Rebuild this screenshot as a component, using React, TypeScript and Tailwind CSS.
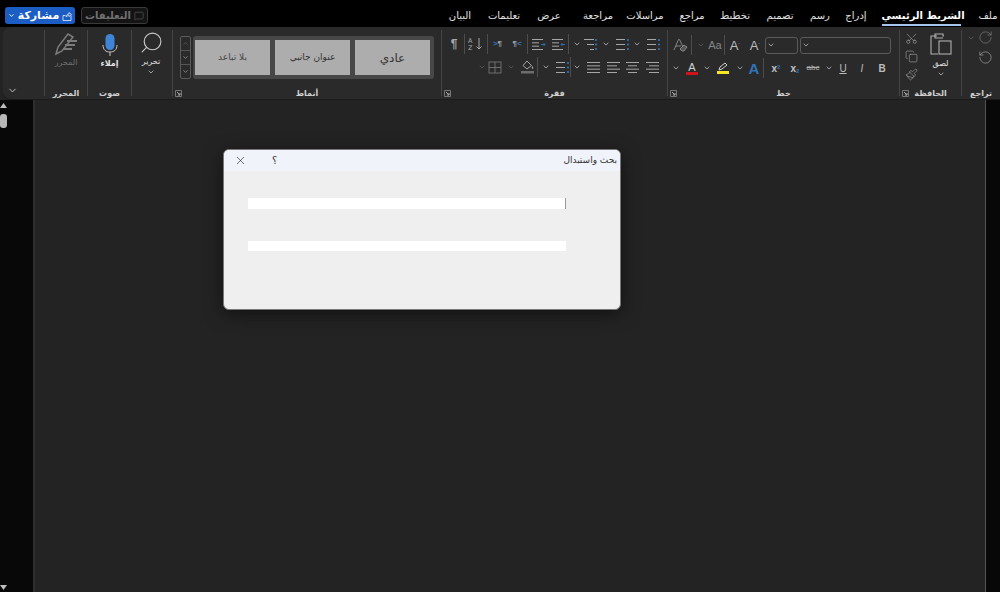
import React from "react";
import { ChevronDown, ChevronUp, X, Search, Scissors, Copy, Paintbrush, RotateCw, RotateCcw, MessageSquare } from "lucide-react";

const C = "#b4b4b4";
const LAT = "font-['Liberation_Sans',sans-serif]";

function Chev({ w = "w-[10px]", dim = false }: { w?: string; dim?: boolean }) {
  return (
    <span className={`${w} flex justify-center shrink-0 ${dim ? "text-[#5f5f5f]" : "text-[#c8c8c8]"}`}>
      <ChevronDown size={8} strokeWidth={2.2} />
    </span>
  );
}

function Lines({ rows, blue = false, indent = 0 }: { rows: [number, number][]; blue?: boolean; indent?: number }) {
  return (
    <svg width="15" height="13" viewBox="0 0 15 13" fill="none" className="shrink-0">
      {rows.map(([a, b], i) => (
        <line key={i} x1={a} x2={b} y1={1.5 + i * (10 / (rows.length - 1))} y2={1.5 + i * (10 / (rows.length - 1))} stroke={C} strokeWidth="0.9" />
      ))}
      {blue && (
        <>
          <circle cx="13" cy="2" r="1.1" fill="#2f74b8" />
          <circle cx="13" cy="6.5" r="1.1" fill="#2f74b8" />
          <circle cx="13" cy="11" r="1.1" fill="#2f74b8" />
        </>
      )}
      {indent === 1 && <path d="M10 6.5h4M12.5 5l1.5 1.5-1.5 1.5" stroke="#2f74b8" strokeWidth="0.9" />}
      {indent === 2 && <path d="M14 6.5h-4M11.5 5L10 6.5 11.5 8" stroke="#2f74b8" strokeWidth="0.9" />}
    </svg>
  );
}

const Sep = () => <span className="w-px h-[20px] bg-[#4d4d4d] shrink-0" />;
const Cell = ({ w, children }: { w: string; children?: React.ReactNode }) => (
  <span className={`${w} h-[20px] shrink-0 flex items-center justify-center`}>{children}</span>
);
const Launcher = () => (
  <svg width="7" height="7" viewBox="0 0 7 7" fill="none" className="shrink-0">
    <path d="M.5 6.5v-6h6v6z" stroke="#777" />
    <path d="M2 2l3 3M5 3v2H3" stroke="#aaa" />
  </svg>
);

function Group({ w, label, launcher, children }: { w: string; label?: string; launcher?: boolean; children: React.ReactNode }) {
  return (
    <div className={`${w} shrink-0 h-full flex`}>
      <span className="w-px h-[66px] mt-[3px] bg-[#454545] shrink-0" />
      <div className="flex-1 min-w-0 flex flex-col">
        <div className="flex-1 min-h-0">{children}</div>
        <div className="h-[14px] flex items-center relative">
          {launcher && (
            <span className="absolute left-[2px] top-[5px]">
              <Launcher />
            </span>
          )}
          <span className="w-full text-center text-[8px] leading-[14px] pt-[3px] font-bold text-[#d0d0d0]">{label}</span>
        </div>
      </div>
    </div>
  );
}

const Tab = ({ w, t, active }: { w: string; t: string; active?: boolean }) => (
  <div className={`${w} shrink-0 flex justify-center`}>
    <span className={`whitespace-nowrap text-[10px] ${active ? "font-bold text-white border-b-2 border-[#a9c4ea] leading-[17px] h-[19px] w-[79px] text-center" : "leading-[18px] h-[18px] text-[#e0e0e0]"}`}>{t}</span>
  </div>
);

function ParaGroup() {
  return (
    <div className="pt-[7px] pl-[2px] flex flex-col gap-[3px]">
      <div className="flex items-center">
        <Cell w="w-[20px]"><span className={`${LAT} text-[12px] font-bold text-[#a8a8a8]`}>¶</span></Cell>
        <Sep />
        <Cell w="w-[22px]">
          <svg width="16" height="14" viewBox="0 0 16 14" fill="none">
            <text x="0" y="6" fontSize="6.5" fill="#a8a8a8">A</text>
            <text x="0" y="13" fontSize="6.5" fill="#a8a8a8">Z</text>
            <path d="M11 1v11M8.5 9.5L11 12l2.500-2.500" stroke={C} strokeWidth="0.9" />
          </svg>
        </Cell>
        <Sep />
        <Cell w="w-[19px]"><span className={`${LAT} text-[8px] font-bold text-[#a8a8a8]`}><span className="text-[#2f74b8]">&gt;</span>¶</span></Cell>
        <Cell w="w-[20px]"><span className={`${LAT} text-[8px] font-bold text-[#a8a8a8]`}>¶<span className="text-[#2f74b8]">&lt;</span></span></Cell>
        <Sep />
        <Cell w="w-[20px]"><Lines rows={[[1, 12], [1, 8], [1, 8], [1, 12]]} indent={1} /></Cell>
        <Cell w="w-[20px]"><Lines rows={[[1, 12], [1, 8], [1, 8], [1, 12]]} indent={2} /></Cell>
        <Sep />
        <span className="w-[3px] shrink-0" />
        <Chev />
        <Cell w="w-[16px]"><Lines rows={[[1, 11], [4, 11], [7, 11]]} blue /></Cell>
        <Chev w="w-[16px]" />
        <Cell w="w-[16px]"><Lines rows={[[1, 10], [1, 10], [1, 10]]} blue /></Cell>
        <Chev w="w-[14px]" />
        <Cell w="w-[18px]"><Lines rows={[[1, 10], [1, 10], [1, 10]]} blue /></Cell>
      </div>
      <div className="flex items-center">
        <span className="w-[33px] shrink-0" />
        <Chev dim />
        <Cell w="w-[16px]">
          <svg width="14" height="13" viewBox="0 0 14 13" fill="none" stroke="#6d6d6d" className="shrink-0">
            <rect x="1" y="1" width="12" height="11" />
            <path d="M7 1v11M1 6.500h12" />
          </svg>
        </Cell>
        <Chev w="w-[16px]" dim />
        <Cell w="w-[16px]">
          <svg width="15" height="14" viewBox="0 0 15 14" fill="none" className="shrink-0">
            <path d="M7 1l4.500 4.500L7 9 3 5.500z" stroke="#a5a5a5" />
            <path d="M12.500 6c1 1.500 1 2.500 0 3-1-.5-1-1.500 0-3z" fill="#a5a5a5" />
            <rect x="1" y="11" width="13" height="2.500" fill="#6d6d6d" />
          </svg>
        </Cell>
        <span className="w-[2px] shrink-0" />
        <Sep />
        <Chev w="w-[16px]" />
        <Cell w="w-[16px]"><Lines rows={[[1, 10], [1, 10], [1, 10]]} blue /></Cell>
        <Sep />
        <Chev w="w-[12px]" />
        <Cell w="w-[20px]"><Lines rows={[[1, 14], [1, 14], [1, 14], [1, 14]]} /></Cell>
        <Cell w="w-[20px]"><Lines rows={[[1, 14], [1, 11], [1, 14], [1, 11]]} /></Cell>
        <Cell w="w-[19px]"><Lines rows={[[1, 14], [3, 12], [1, 14], [3, 12]]} /></Cell>
        <Cell w="w-[20px]"><Lines rows={[[1, 14], [4, 14], [1, 14], [4, 14]]} /></Cell>
      </div>
    </div>
  );
}

function FontGroup() {
  return (
    <div className={`pt-[8px] pl-[3px] flex flex-col gap-[3px] ${LAT}`}>
      <div className="flex items-center h-[20px]">
        <Cell w="w-[20px]">
          <svg width="16" height="15" viewBox="0 0 16 15" fill="none" stroke="#858585">
            <path d="M1 12L5.500 1.500h1L10 9M3 8h5" />
            <path d="M9 13l-2-2 4-4 3 2-3 4z" fill="#555" />
          </svg>
        </Cell>
        <Sep />
        <span className="w-[4px] shrink-0" />
        <Chev dim />
        <Cell w="w-[18px]"><span className="text-[11px] text-[#858585]">Aa</span></Cell>
        <Sep />
        <Cell w="w-[20px]"><span className="text-[13px] text-[#bcbcbc] leading-none">A<sup className="text-[6px] text-[#2f74b8]">ˇ</sup></span></Cell>
        <Cell w="w-[20px]"><span className="text-[13px] text-[#bcbcbc] leading-none">A<sup className="text-[6px] text-[#2f74b8]">ˆ</sup></span></Cell>
        <div className="w-[33px] h-[17px] border border-[#5a5a5a] rounded-[3px] flex items-center shrink-0">
          <Chev />
        </div>
        <div className="w-[91px] h-[17px] border border-[#5a5a5a] rounded-[3px] flex items-center shrink-0 ml-[2px]">
          <Chev />
        </div>
      </div>
      <div className="flex items-center h-[20px]">
        <Chev />
        <Cell w="w-[22px]">
          <span className="flex flex-col items-center leading-none">
            <span className="text-[11px] text-[#d0d0d0] leading-[10px]">A</span>
            <span className="w-[12px] h-[3px] bg-[#d0131b]" />
          </span>
        </Cell>
        <Chev w="w-[8px]" />
        <Cell w="w-[24px]">
          <span className="flex flex-col items-center">
            <svg width="12" height="9" viewBox="0 0 12 9" fill="none"><path d="M2 8l1-3 5-4 2 2-5 4z" stroke="#d0d0d0" /></svg>
            <span className="w-[12px] h-[3px] bg-[#f5e625]" />
          </span>
        </Cell>
        <Chev />
        <Cell w="w-[18px]"><span className="text-[15px] font-bold text-[#2f74b8] leading-none">A</span></Cell>
        <Sep />
        <Cell w="w-[24px]"><span className="text-[10px] font-bold text-[#c4c4c4]">x<sup className="text-[6px] text-[#2f74b8]">2</sup></span></Cell>
        <Cell w="w-[14px]"><span className="text-[10px] font-bold text-[#c4c4c4]">x<sub className="text-[6px] text-[#2f74b8]">2</sub></span></Cell>
        <Cell w="w-[22px]"><span className="text-[8px] text-[#b0b0b0] line-through">abc</span></Cell>
        <Chev />
        <Cell w="w-[18px]"><span className="text-[10px] underline text-[#bcbcbc]">U</span></Cell>
        <Cell w="w-[20px]"><span className="text-[10px] italic text-[#bcbcbc]">I</span></Cell>
        <Cell w="w-[20px]"><span className="text-[10px] font-bold text-[#bcbcbc]">B</span></Cell>
      </div>
    </div>
  );
}

export default function App() {
  return (
    <div className="w-[1000px] h-[592px] overflow-hidden bg-[#232323] flex flex-col relative font-['DejaVu_Sans','Noto_Sans',sans-serif]">
      {/* title / tabs */}
      <div className="h-[27px] bg-black flex items-start shrink-0">
        <div className="ml-[5px] mt-[7px] w-[70px] shrink-0 h-[17px] bg-[#1c5dc4] rounded-[3px] flex items-center justify-center gap-[3px] text-white">
          <ChevronDown size={7} strokeWidth={3} />
          <span className="text-[11px] font-bold leading-none whitespace-nowrap">مشاركة</span>
          <svg width="10" height="10" viewBox="0 0 10 10" fill="none" stroke="#cfe0f7" strokeWidth="0.9">
            <path d="M1 4.500v5h8v-5M1 4.500l2.500 0M4 6c0-2 1.500-3 3-3V1.500L9.500 3.500 7 5.500V4.500c-1 0-2 .5-3 1.500z" />
          </svg>
        </div>
        <div className="ml-[6px] mt-[7px] w-[67px] shrink-0 h-[17px] bg-[#141414] border border-[#3a3a3a] rounded-[3px] flex items-center justify-center gap-[3px] text-[#707070]">
          <span className="text-[10px] font-bold leading-none whitespace-nowrap">التعليقات</span>
          <MessageSquare size={10} strokeWidth={1.2} />
        </div>
        <div className="ml-[291px] mt-[7px] flex items-start shrink-0">
          <Tab w="w-[42px]" t="البيان" />
          <Tab w="w-[46px]" t="تعليمات" />
          <Tab w="w-[44px]" t="عرض" />
          <Tab w="w-[54px]" t="مراجعة" />
          <Tab w="w-[40px]" t="مراسلات" />
          <Tab w="w-[54px]" t="مراجع" />
          <Tab w="w-[32px]" t="تخطيط" />
          <Tab w="w-[58px]" t="تصميم" />
          <Tab w="w-[22px]" t="رسم" />
          <Tab w="w-[50px]" t="إدراج" />
          <Tab w="w-[80px]" t="الشريط الرئيسي" active />
          <Tab w="w-[54px]" t="ملف" />
        </div>
      </div>

      {/* ribbon */}
      <div className="ml-[3px] h-[73px] bg-[#2a2a2a] rounded-l-[8px] flex shrink-0 border-b border-[#1b1b1b]">
        <div className="w-[41px] shrink-0 h-full flex items-end pb-[3px] pl-[4px] text-[#cfcfcf]">
          <ChevronDown size={11} />
        </div>
        <Group w="w-[43px]" label="المحرر">
          <div className="flex flex-col items-center pt-[5px]">
            <svg width="25" height="24" viewBox="0 0 25 24" fill="none" stroke="#7b7b7b" strokeWidth="1.5">
              <path d="M2 22l2-7L14 2l5 3L8 19z" />
              <path d="M13 9h10M11 13h10M9 17h9" strokeWidth="2" />
            </svg>
            <span className="text-[8px] leading-[12px] text-[#6f6f6f] mt-[1px]">المحرر</span>
          </div>
        </Group>
        <Group w="w-[44px]" label="صوت">
          <div className="flex flex-col items-center pt-[7px]">
            <svg width="16" height="23" viewBox="0 0 16 23" fill="none">
              <rect x="3.500" y="0" width="9" height="16" rx="4.500" fill="#3f84d6" />
              <path d="M1 11c0 5 3 7 7 7s7-2 7-7M8 18v4" stroke="#c4c4c4" />
            </svg>
            <span className="text-[8px] leading-[12px] font-bold text-[#e2e2e2] mt-[1px]">إملاء</span>
          </div>
        </Group>
        <Group w="w-[41px]">
          <div className="flex flex-col items-center pt-[3px] pr-[2px]">
            <Search size={25} strokeWidth={1.1} color="#c8c8c8" className="-scale-x-100" />
            <span className="text-[8px] leading-[12px] text-[#e2e2e2] mt-[1px]">تحرير</span>
            <Chev />
          </div>
        </Group>
        <Group w="w-[269px]" label="أنماط" launcher>
          <div className="pl-[7px] pt-[9px] flex">
            <div className="w-[11px] h-[43px] flex flex-col shrink-0 border border-[#5a5a5a] rounded-[2px] bg-[#2a2a2a] text-[#bbb]">
              <span className="flex-1 flex items-center justify-center border-b border-[#555]"><ChevronUp size={7} color="#666" /></span>
              <span className="flex-1 flex items-center justify-center border-b border-[#555]"><ChevronDown size={7} /></span>
              <span className="flex-1 flex items-center justify-center"><ChevronDown size={7} /></span>
            </div>
            <div className="ml-[2px] w-[241px] h-[43px] bg-[#474747] rounded-[3px] flex items-center pl-[2px] gap-[5px] shrink-0">
              <div className="w-[75px] h-[35px] pt-[1px] bg-[#adadad] flex items-center justify-center text-[9px] text-[#444]">بلا تباعد</div>
              <div className="w-[75px] h-[35px] pt-[1px] bg-[#adadad] flex items-center justify-center text-[9px] text-[#333]">عنوان جانبي</div>
              <div className="w-[75px] h-[35px] bg-[#adadad] flex items-center justify-center text-[12px] text-[#333]">عادي</div>
            </div>
          </div>
        </Group>
        <Group w="w-[226px]" label="فقرة" launcher><ParaGroup /></Group>
        <Group w="w-[232px]" label="خط" launcher><FontGroup /></Group>
        <Group w="w-[62px]" label="الحافظة" launcher>
          <div className="flex pl-[3px] pt-[5px]">
            <div className="w-[17px] flex flex-col items-center gap-[5px] text-[#9f9f9f]">
              <Scissors size={13} strokeWidth={1.2} className="-rotate-90" />
              <Copy size={13} strokeWidth={1.2} />
              <Paintbrush size={13} strokeWidth={1.2} />
            </div>
            <div className="flex-1 flex flex-col items-center pt-[1px]">
              <svg width="22" height="22" viewBox="0 0 22 22" fill="none" stroke="#b0b0b0" strokeWidth="1.1">
                <path d="M7 3H1v18h7M14 3h-1V1H5v4h8" />
                <rect x="9" y="8" width="12" height="13" />
              </svg>
              <span className="text-[8px] leading-[12px] text-[#e2e2e2] mt-[3px]">لصق</span>
              <Chev />
            </div>
          </div>
        </Group>
        <Group w="w-[39px]" label="تراجع">
          <div className="flex flex-col items-end pr-[7px] pt-[3px] text-[#7d7d7d]">
            <div className="flex items-center gap-[2px]">
              <Chev dim />
              <RotateCw size={15} strokeWidth={1.1} />
            </div>
            <RotateCcw size={15} strokeWidth={1.1} className="mt-[5px] text-[#a0a0a0]" />
          </div>
        </Group>
      </div>

      {/* document */}
      <div className="flex-1 flex min-h-0">
        <div className="w-[33px] bg-[#080808] flex flex-col items-start shrink-0">
          <svg width="7" height="5" viewBox="0 0 7 5" className="mt-[3px]"><path d="M3.500 0L7 5H0z" fill="#bdbdbd" /></svg>
          <div className="w-[7px] h-[14px] mt-[6px] bg-[#b8b8b8] rounded-[3px]" />
          <svg width="7" height="5" viewBox="0 0 7 5" className="mt-auto mb-[2px]"><path d="M3.500 5L7 0H0z" fill="#bdbdbd" /></svg>
        </div>
        <div className="w-[2px] bg-[#2f2f2f] shrink-0" />
        <div className="flex-1 bg-[#232323] pt-[49px] pl-[188px]">
          <div className="w-[398px] h-[161px] bg-[#efefef] rounded-[6px] border border-[#777] overflow-hidden shadow-[0_4px_18px_rgba(0,0,0,0.5)] flex flex-col">
            <div className="h-[21px] bg-[#f0f3f9] flex items-center pl-[10px] pr-[3px] shrink-0">
              <X size={13} strokeWidth={1.2} color="#222" />
              <span className="ml-[25px] text-[10px] text-[#333] leading-none">؟</span>
              <span className="ml-auto text-[9px] text-[#333] leading-none whitespace-nowrap">بحث واستبدال</span>
            </div>
            <div className="pl-[24px] pt-[27px] flex flex-col gap-[32px]">
              <div className="flex items-center w-[318px] h-[11px] bg-white justify-end">
                <span className="w-px h-[11px] bg-[#999]" />
              </div>
              <div className="w-[318px] h-[10px] bg-white" />
            </div>
          </div>
        </div>
        <div className="w-px bg-[#555] shrink-0" />
        <div className="w-[14px] bg-[#080808] shrink-0" />
      </div>
    </div>
  );
}
